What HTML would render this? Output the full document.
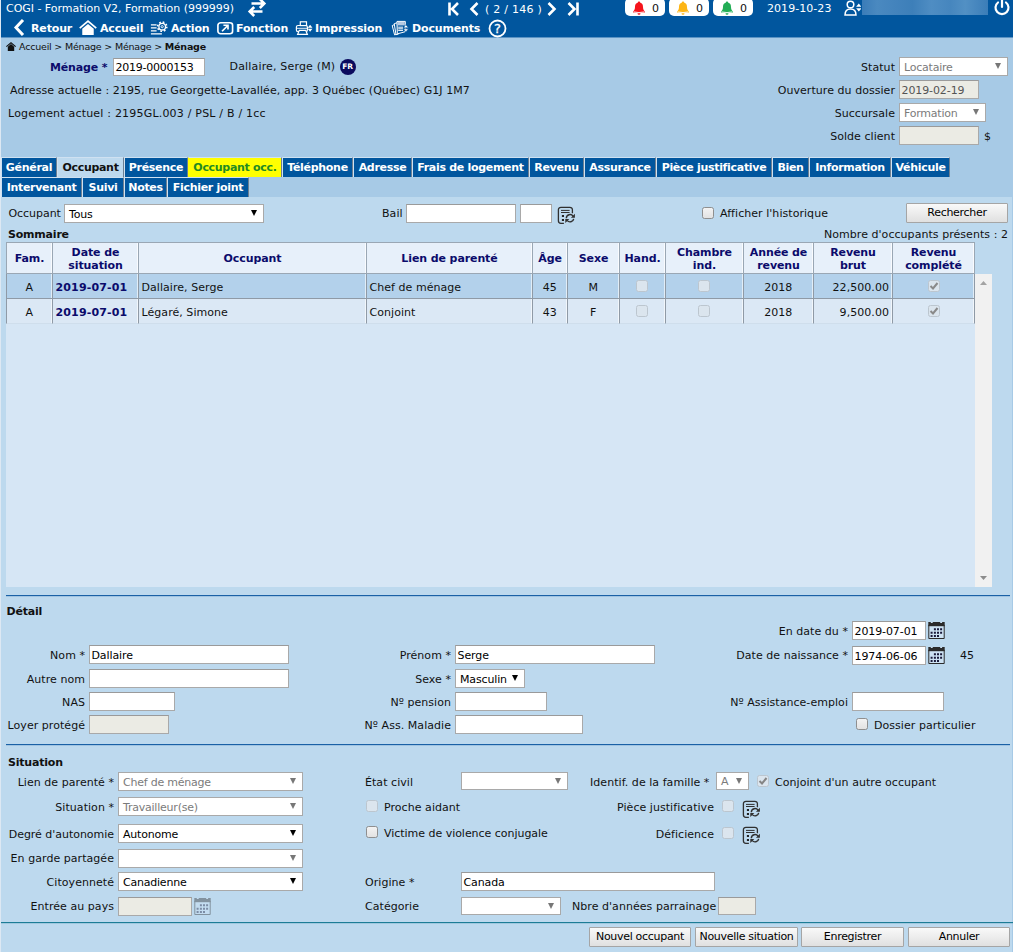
<!DOCTYPE html>
<html lang="fr">
<head>
<meta charset="utf-8">
<title>COGI - Ménage</title>
<style>
*{box-sizing:border-box;margin:0;padding:0}
html,body{width:1013px;height:952px;overflow:hidden}
body{position:relative;background:#a7cae6;font-family:"DejaVu Sans","Liberation Sans",sans-serif;font-size:11px;color:#111;letter-spacing:.05px}
.a{position:absolute;white-space:nowrap}
.t{position:absolute;white-space:nowrap;height:18px;line-height:20px}
.r{text-align:right}
.b{font-weight:bold}
#hdr{left:0;top:0;width:1013px;height:38px;background:#01569e;border-bottom:1px solid #5b93c4}
#hdr .w{color:#fff}
.menu{color:#fff;font-weight:bold;font-size:11px;letter-spacing:-.15px;height:16px;line-height:16px;top:21px}
.pill{top:-2px;height:18px;width:40px;background:#fff;border-radius:5px;color:#111;line-height:21px;padding-left:27px}
.in{letter-spacing:-.1px;position:absolute;height:19px;background:#fff;border:1px solid #a9a9a9;border-top-color:#9a9a9a;line-height:19px;padding-left:1.5px;white-space:nowrap;overflow:hidden;color:#000}
.in.d{background:#ebebe4;color:#545454}
.sel{letter-spacing:-.22px;position:absolute;height:19px;background:#fff;border:1px solid #a9a9a9;line-height:19px;padding-left:4px;white-space:nowrap;overflow:hidden;color:#000}
.sel.g{color:#7b7b7b}
.sel:after{content:"";position:absolute;right:6px;top:5px;border-left:3.2px solid transparent;border-right:3.2px solid transparent;border-top:6px solid #000}
.sel.g:after{border-top-color:#777}
.cb{position:absolute;width:12px;height:12px;border:1px solid #8f8f8f;border-radius:2.500px;background:linear-gradient(#f3f3f3,#e2e2e2)}
.cb.d{border-color:#bcc6cf;background:#dbe5ee}
.btn{position:absolute;height:20px;border:1px solid #a5a5a5;background:linear-gradient(#f9f9f9,#e0e0e0);text-align:center;line-height:18px;letter-spacing:-.3px;color:#000;border-radius:1px}
#panel{left:1px;top:197px;width:1011px;height:755px;background:#bdd9ee}
.tab{position:absolute;height:20px;line-height:19px;background:#01569e;color:#fff;font-weight:bold;text-align:center;letter-spacing:-.3px;border-top:1px solid #cfe1f1;border-left:1px solid #cfe1f1;border-right:1px solid #6c7f92}
.tab.on{background:#bdd9ee;color:#111}
.tab.y{background:#ffff00;color:#238a23;border-left-color:#ffff00}
.hr{position:absolute;left:6px;width:1004px;height:2px;background:linear-gradient(#1a61a6 50%,rgba(26,97,166,.18) 50%)}
table{border-collapse:collapse}
#grid{left:6px;top:242px;width:969px;height:345px;background:#d6e6f5}
#grid .h{position:absolute;top:0;height:32px;background:#e7f0fa;border:1px solid #9aa7b4;color:#0b0b6b;font-weight:bold;text-align:center;line-height:13px;letter-spacing:-.1px;display:flex;align-items:center;justify-content:center;padding-top:1px;box-shadow:inset -1px 0 0 rgba(255,255,255,.75)}
#grid .c{position:absolute;height:25px;line-height:20px;padding-top:4px !important;border-right:1px solid #8f9aa6;border-bottom:1px solid #8f9aa6;padding:0 3px 0 2.500px;box-shadow:inset -1px 0 0 rgba(255,255,255,.6);text-align:center;white-space:nowrap}
.r1 .c{background:#b3d1eb}
.r2 .c{background:#dbe8f5;border-bottom-color:#cfdeec !important}
</style>
</head>
<body>
<!-- header -->
<div class="a" id="hdr">
  <div class="t w" style="left:6px;top:-1px;letter-spacing:-.03px">COGI - Formation V2, Formation (999999)</div>
  <svg class="a" style="left:247px;top:-2px" width="20" height="19" viewBox="0 0 20 19"><g fill="none" stroke="#fff" stroke-width="2.6"><path d="M4.500 5.500h12M12.800 1l4.500 4.500l-4.500 4.500"/><path d="M15.500 13.500h-12M7.200 9l-4.500 4.500l4.500 4.500"/></g></svg>
  <svg class="a" style="left:446px;top:2px" width="135" height="14" viewBox="0 0 135 14"><g fill="none" stroke="#fff" stroke-width="2.6"><path d="M3.500 0.500v13M12 1l-6 6l6 6"/><path d="M31.500 1l-6 6l6 6"/><path d="M102.5 1l6 6l-6 6"/><path d="M131.5 0.5v13M122.5 1l6 6l-6 6"/></g></svg>
  <div class="t w" style="left:485px;top:0;letter-spacing:.25px">( 2 / 146 )</div>
  <div class="a pill" style="left:625px">0</div>
  <div class="a pill" style="left:669px">0</div>
  <div class="a pill" style="left:713px">0</div>
  <svg class="a" style="left:632px;top:1px" width="14" height="14" viewBox="0 0 14 14"><path fill="#f5141c" d="M7 0.5c.7 0 1.1.5 1.1 1.1c2 .6 2.9 2.200 2.900 4.400c0 2.500.8 3.500 2 4.500v1h-12v-1c1.200-1 2-2 2-4.500c0-2.200.9-3.800 2.900-4.400c0-.6.4-1.100 1.100-1.100zM5.500 12.300h3a1.500 1.500 0 0 1-3 0z"/><path d="M1.500 10.800q5.500 1.600 11 0" fill="none" stroke="#fff" stroke-width=".8"/></svg>
  <svg class="a" style="left:676px;top:1px" width="14" height="14" viewBox="0 0 14 14"><path fill="#fdb515" d="M7 0.5c.7 0 1.1.5 1.1 1.1c2 .6 2.900 2.200 2.900 4.400c0 2.500.8 3.500 2 4.500v1h-12v-1c1.200-1 2-2 2-4.500c0-2.200.9-3.800 2.900-4.400c0-.6.4-1.100 1.100-1.100zM5.500 12.300h3a1.500 1.500 0 0 1-3 0z"/><path d="M1.500 10.800q5.500 1.600 11 0" fill="none" stroke="#fff" stroke-width=".8"/></svg>
  <svg class="a" style="left:720px;top:1px" width="14" height="14" viewBox="0 0 14 14"><path fill="#22ad55" d="M7 0.5c.7 0 1.1.5 1.1 1.1c2 .6 2.900 2.200 2.900 4.400c0 2.500.8 3.500 2 4.500v1h-12v-1c1.200-1 2-2 2-4.500c0-2.200.9-3.800 2.900-4.400c0-.6.4-1.100 1.100-1.100zM5.500 12.300h3a1.500 1.500 0 0 1-3 0z"/><path d="M1.500 10.800q5.500 1.600 11 0" fill="none" stroke="#fff" stroke-width=".8"/></svg>
  <div class="t w" style="left:767px;top:-1px">2019-10-23</div>
  <svg class="a" style="left:844px;top:0px" width="17" height="16" viewBox="0 0 17 16"><g fill="none" stroke="#fff" stroke-width="1.5"><circle cx="6.500" cy="4.500" r="3.300"/><path d="M1 15c0-4 2-6 5.500-6s5.500 2 5.500 6z"/></g><path fill="#fff" d="M14.800 3.600l2.700 3.200h-5.400zM14.800 11.500l2.700-3.200h-5.400z"/></svg>
  <div class="a" style="left:862px;top:0;width:126px;height:15px;background:linear-gradient(90deg,#3a7cb8,#4a89c0 12%,#4484bd 25%,#3d7fb9 40%,#4f8dc3 55%,#4686be 70%,#5290c4 82%,#3b7db8)"></div>
  <svg class="a" style="left:993px;top:-1px" width="18" height="18" viewBox="0 0 18 18"><g fill="none" stroke="#fff" stroke-width="2.200" stroke-linecap="round"><path d="M9 1v7"/><path d="M5 3.500a6.500 6.500 0 1 0 8 0"/></g></svg>
  <!-- menu -->
  <svg class="a" style="left:13px;top:19px" width="12" height="17" viewBox="0 0 12 17"><path fill="none" stroke="#fff" stroke-width="3" d="M10 1l-7 7.500l7 7.500"/></svg>
  <div class="a menu" style="left:31px">Retour</div>
  <svg class="a" style="left:79px;top:20px" width="18" height="15" viewBox="0 0 20 17"><path fill="#fff" d="M10 0l10 8.500l-1.300 1.400l-8.700-7.300l-8.700 7.300l-1.300-1.400zM3.500 10l6.500-5.400l6.500 5.400v7h-13z"/></svg>
  <div class="a menu" style="left:100px">Accueil</div>
  <svg class="a" style="left:150px;top:20px" width="18" height="16" viewBox="0 0 18 16"><g fill="none" stroke="#fff"><path d="M0.900 4.900h5.700M0.900 7.800h5.700M0.900 10.800h5.700M0.900 13.800h11" stroke-width="1.300"/><circle cx="12.200" cy="6.700" r="3.300" stroke-width="1.300"/><circle cx="12.200" cy="6.700" r="4.600" stroke-width="1.600" stroke-dasharray="1.700 1.910"/><circle cx="12.200" cy="6.700" r="1.100" stroke-width=".9"/></g></svg>
  <div class="a menu" style="left:171px">Action</div>
  <svg class="a" style="left:217px;top:22px" width="16.500" height="12.500" viewBox="0 0 18 15" preserveAspectRatio="none"><rect x="1" y="1" width="16" height="13" rx="3" fill="none" stroke="#fff" stroke-width="1.800"/><path fill="none" stroke="#fff" stroke-width="1.800" d="M5.500 11l6-6.500M7 4h5v5"/></svg>
  <div class="a menu" style="left:236px">Fonction</div>
  <svg class="a" style="left:295px;top:20px" width="18" height="16" viewBox="0 0 18 16"><g fill="none" stroke="#fff" stroke-width="1.200"><rect x="5.300" y="1.800" width="6.200" height="3.800"/><rect x="1.400" y="5.500" width="11" height="6" rx="1.600"/><path d="M2 8.300h10" stroke-width=".9"/><path d="M4.300 10.300h6.400l1.700 4.100h-9.800z" fill="#01569e"/></g><path fill="#fff" d="M15.100 4.800l2.400 3h-4.800zM15.100 11.800l2.400-3h-4.800z"/></svg>
  <div class="a menu" style="left:315px">Impression</div>
  <svg class="a" style="left:391px;top:20px" width="19" height="16" viewBox="0 0 19 16"><g fill="#01569e" stroke="#fff" stroke-width="1"><path d="M1.200 5.600l3-1.400l1.600 10l-2.200.7z"/><path d="M3.200 3.700l3-1l1.200 11.400l-2.400.6z"/><path d="M6 1.400h8.300v10.300l-8 2.200z"/></g><path d="M6.600 2h7.200v3.400h-7.200z" fill="#b6cae2"/><path d="M7.200 7.200h4.800M7.200 8.800h4.800M7.200 10.400h4.800" stroke="#fff" stroke-width="1" fill="none"/><path fill="#fff" stroke="#01569e" stroke-width=".6" d="M14.900 4.700l2.600 3.100h-5.200zM14.900 11.900l2.600-3.100h-5.200z"/></svg>
  <div class="a menu" style="left:412px">Documents</div>
  <svg class="a" style="left:488px;top:19px" width="19" height="19" viewBox="0 0 19 19"><circle cx="9.500" cy="9.500" r="8" fill="none" stroke="#fff" stroke-width="1.800"/><text x="9.500" y="14" text-anchor="middle" font-family="DejaVu Sans, sans-serif" font-size="13" fill="#fff" stroke="#fff" stroke-width=".3">?</text></svg>
</div>

<!-- breadcrumb -->
<svg class="a" style="left:5.500px;top:41.500px" width="10" height="9" viewBox="0 0 10 9"><path fill="#111" d="M5 0l5 4.200l-.7.800l-4.300-3.600l-4.300 3.600l-.7-.8zM1.800 4.700l3.200-2.700l3.200 2.700v4.300h-6.400z"/></svg>
<div class="a" style="left:19px;top:40px;font-size:9.500px;height:13px;line-height:13px;letter-spacing:-.2px">Accueil &gt; Ménage &gt; Ménage &gt; <b>Ménage</b></div>

<!-- top info -->
<div class="t b" style="left:50px;top:58px;color:#0b0b6b;letter-spacing:-.15px">Ménage *</div>
<div class="in" style="left:113px;top:58px;width:92px;height:18px;line-height:18px;letter-spacing:-.25px">2019-0000153</div>
<div class="t" style="left:229.500px;top:57px;letter-spacing:.17px">Dallaire, Serge (M)</div>
<div class="a" style="left:339.500px;top:58.500px;width:16px;height:16px;border-radius:50%;background:#0b0b5e;color:#fff;font-size:7.500px;font-weight:bold;text-align:center;line-height:16px;letter-spacing:-.2px">FR</div>
<div class="t" style="left:10px;top:81px;letter-spacing:.07px">Adresse actuelle : 2195, rue Georgette-Lavallée, app. 3 Québec (Québec) G1J 1M7</div>
<div class="t" style="left:8px;top:104px;letter-spacing:.2px">Logement actuel : 2195GL.003 / PSL / B / 1cc</div>

<div class="t r" style="left:700px;width:195px;top:58px">Statut</div>
<div class="sel g" style="left:899px;top:57px;width:109px">Locataire</div>
<div class="t r" style="left:700px;width:195px;top:81px">Ouverture du dossier</div>
<div class="in d" style="left:899px;top:80px;width:80px">2019-02-19</div>
<div class="t r" style="left:700px;width:195px;top:104px">Succursale</div>
<div class="sel g" style="left:899px;top:103px;width:87px">Formation</div>
<div class="t r" style="left:700px;width:195px;top:127px">Solde client</div>
<div class="in d" style="left:899px;top:126px;width:80px"></div>
<div class="t" style="left:984px;top:127px">$</div>

<!-- tabs -->
<div class="tab" style="left:1px;top:157px;width:56px">Général</div>
<div class="tab on" style="left:57px;top:157px;width:67px">Occupant</div>
<div class="tab" style="left:124px;top:157px;width:64px">Présence</div>
<div class="tab y" style="left:188px;top:157px;width:94px">Occupant occ.</div>
<div class="tab" style="left:282px;top:157px;width:71px">Téléphone</div>
<div class="tab" style="left:353px;top:157px;width:59px">Adresse</div>
<div class="tab" style="left:412px;top:157px;width:117px">Frais de logement</div>
<div class="tab" style="left:529px;top:157px;width:55px">Revenu</div>
<div class="tab" style="left:584px;top:157px;width:72px">Assurance</div>
<div class="tab" style="left:656px;top:157px;width:116px">Pièce justificative</div>
<div class="tab" style="left:772px;top:157px;width:37px">Bien</div>
<div class="tab" style="left:809px;top:157px;width:82px">Information</div>
<div class="tab" style="left:891px;top:157px;width:59px">Véhicule</div>
<div class="tab" style="left:1px;top:177px;width:81px">Intervenant</div>
<div class="tab" style="left:82px;top:177px;width:42px">Suivi</div>
<div class="tab" style="left:124px;top:177px;width:43px">Notes</div>
<div class="tab" style="left:167px;top:177px;width:82px">Fichier joint</div>

<div class="a" id="panel"></div>
<div class="a" style="left:0;top:0;width:1px;height:952px;background:#dde8f3;z-index:5"></div>

<!-- filter row -->
<div class="t" style="left:8.500px;top:204px;letter-spacing:-.05px">Occupant</div>
<div class="sel" style="left:64px;top:204px;width:200px">Tous</div>
<div class="t" style="left:382px;top:204px">Bail</div>
<div class="in" style="left:406px;top:204px;width:110px"></div>
<div class="in" style="left:520px;top:204px;width:32px"></div>
<svg class="a ic" style="left:557px;top:206px" width="19" height="19" viewBox="0 0 19 19"><use href="#icf"/></svg>
<div class="cb" style="left:702px;top:207px"></div>
<div class="t" style="left:720px;top:204px">Afficher l'historique</div>
<div class="btn" style="left:906px;top:203px;width:102px">Rechercher</div>

<div class="t b" style="left:8px;top:225px;letter-spacing:-.2px">Sommaire</div>
<div class="t r" style="left:800px;width:208px;top:225px">Nombre d'occupants présents : 2</div>

<!-- grid -->
<div class="a" id="grid">
  <div class="h" style="left:0;width:47px">Fam.</div>
  <div class="h" style="left:46px;width:87px">Date de<br>situation</div>
  <div class="h" style="left:132px;width:229px">Occupant</div>
  <div class="h" style="left:360px;width:167px">Lien de parenté</div>
  <div class="h" style="left:526px;width:36px">Âge</div>
  <div class="h" style="left:561px;width:53px">Sexe</div>
  <div class="h" style="left:613px;width:47px">Hand.</div>
  <div class="h" style="left:659px;width:79px">Chambre<br>ind.</div>
  <div class="h" style="left:737px;width:71px">Année de<br>revenu</div>
  <div class="h" style="left:807px;width:80px">Revenu<br>brut</div>
  <div class="h" style="left:886px;width:83px">Revenu<br>complété</div>
  <div class="r1">
    <div class="c" style="top:32px;left:0;width:47px;border-left:1px solid #8f9aa6">A</div>
    <div class="c b" style="top:32px;left:47px;width:86px;color:#0b0b6b;text-align:left;letter-spacing:.15px">2019-07-01</div>
    <div class="c" style="top:32px;left:133px;width:228px;text-align:left">Dallaire, Serge</div>
    <div class="c" style="top:32px;left:361px;width:166px;text-align:left">Chef de ménage</div>
    <div class="c" style="top:32px;left:527px;width:35px">45</div>
    <div class="c" style="top:32px;left:562px;width:52px">M</div>
    <div class="c" style="top:32px;left:614px;width:46px"><span class="cb d" style="left:16px;top:6px"></span></div>
    <div class="c" style="top:32px;left:660px;width:78px"><span class="cb d" style="left:32px;top:6px"></span></div>
    <div class="c" style="top:32px;left:738px;width:70px">2018</div>
    <div class="c" style="top:32px;left:808px;width:79px;text-align:right">22,500.00</div>
    <div class="c" style="top:32px;left:887px;width:82px"><span class="cb d" style="left:35px;top:6px"></span><svg class="a" style="left:36px;top:7px" width="10" height="10" viewBox="0 0 10 10"><path d="M1.500 5l2.500 2.500l4.500-5.500" fill="none" stroke="#8a8a8a" stroke-width="2"/></svg></div>
  </div>
  <div class="r2">
    <div class="c" style="top:57px;left:0;width:47px;border-left:1px solid #8f9aa6">A</div>
    <div class="c b" style="top:57px;left:47px;width:86px;color:#0b0b6b;text-align:left;letter-spacing:.15px">2019-07-01</div>
    <div class="c" style="top:57px;left:133px;width:228px;text-align:left">Légaré, Simone</div>
    <div class="c" style="top:57px;left:361px;width:166px;text-align:left">Conjoint</div>
    <div class="c" style="top:57px;left:527px;width:35px">43</div>
    <div class="c" style="top:57px;left:562px;width:52px">F</div>
    <div class="c" style="top:57px;left:614px;width:46px"><span class="cb d" style="left:16px;top:6px"></span></div>
    <div class="c" style="top:57px;left:660px;width:78px"><span class="cb d" style="left:32px;top:6px"></span></div>
    <div class="c" style="top:57px;left:738px;width:70px">2018</div>
    <div class="c" style="top:57px;left:808px;width:79px;text-align:right">9,500.00</div>
    <div class="c" style="top:57px;left:887px;width:82px"><span class="cb d" style="left:35px;top:6px"></span><svg class="a" style="left:36px;top:7px" width="10" height="10" viewBox="0 0 10 10"><path d="M1.500 5l2.500 2.500l4.500-5.500" fill="none" stroke="#8a8a8a" stroke-width="2"/></svg></div>
  </div>
</div>
<!-- scrollbar -->
<div class="a" style="left:975px;top:274px;width:17px;height:313px;background:#f1f1f1"></div>
<svg class="a" style="left:980px;top:281px" width="7" height="4" viewBox="0 0 7 4"><path d="M3.500 0l3.500 4h-7z" fill="#a3a3a3"/></svg>
<svg class="a" style="left:980px;top:576px" width="7" height="4" viewBox="0 0 7 4"><path d="M3.500 4l3.500-4h-7z" fill="#8c8c8c"/></svg>

<!-- DETAIL -->
<div class="hr" style="top:595px"></div>
<div class="t b" style="left:6.500px;top:602px;letter-spacing:-.2px">Détail</div>


<div class="t r" style="left:648px;width:200px;top:622px">En date du *</div>
<div class="in" style="left:852px;top:621px;width:74px">2019-07-01</div>
<svg class="a" style="left:928px;top:622px" width="17" height="17" viewBox="0 0 17 17"><use href="#cal"/></svg>
<div class="t r" style="left:0;width:85px;top:646px">Nom *</div>
<div class="in" style="left:89px;top:645px;width:200px">Dallaire</div>
<div class="t r" style="left:300px;width:151px;top:646px">Prénom *</div>
<div class="in" style="left:455px;top:645px;width:200px">Serge</div>
<div class="t r" style="left:648px;width:200px;top:646px">Date de naissance *</div>
<div class="in" style="left:852px;top:646px;width:74px">1974-06-06</div>
<svg class="a" style="left:928px;top:647px" width="17" height="17" viewBox="0 0 17 17"><use href="#cal"/></svg>
<div class="t" style="left:960px;top:646px">45</div>
<div class="t r" style="left:0;width:85px;top:670px">Autre nom</div>
<div class="in" style="left:89px;top:669px;width:200px"></div>
<div class="t r" style="left:300px;width:151px;top:670px">Sexe *</div>
<div class="sel" style="left:455px;top:669px;width:70px;letter-spacing:-.15px">Masculin</div>
<div class="t r" style="left:0;width:85px;top:693px">NAS</div>
<div class="in" style="left:89px;top:692px;width:86px"></div>
<div class="t r" style="left:300px;width:151px;top:693px">Nº pension</div>
<div class="in" style="left:455px;top:692px;width:92px"></div>
<div class="t r" style="left:648px;width:200px;top:693px">Nº Assistance-emploi</div>
<div class="in" style="left:852px;top:692px;width:92px"></div>
<div class="t r" style="left:0;width:85px;top:716px">Loyer protégé</div>
<div class="in d" style="left:89px;top:715px;width:80px"></div>
<div class="t r" style="left:300px;width:151px;top:716px">Nº Ass. Maladie</div>
<div class="in" style="left:455px;top:715px;width:128px"></div>
<div class="cb" style="left:856px;top:718px"></div>
<div class="t" style="left:874px;top:716px">Dossier particulier</div>
<div class="hr" style="top:744px"></div>
<div class="t b" style="left:8px;top:753px;letter-spacing:-.2px">Situation</div>


<div class="t r" style="left:0;width:114px;top:773px">Lien de parenté *</div>
<div class="sel g" style="left:118px;top:772px;width:185px">Chef de ménage</div>
<div class="t" style="left:365px;top:773px">État civil</div>
<div class="sel g" style="left:461px;top:772px;width:107px;height:18px"></div>
<div class="t" style="left:590px;top:773px">Identif. de la famille *</div>
<div class="sel g" style="left:716px;top:772px;width:33px;height:18px;line-height:18px">A</div>
<div class="cb d" style="left:757px;top:775px"></div>
<svg class="a" style="left:758px;top:776px" width="10" height="10" viewBox="0 0 10 10"><path d="M1.500 5l2.500 2.500l4.500-5.500" fill="none" stroke="#858585" stroke-width="2"/></svg>
<div class="t" style="left:775px;top:773px">Conjoint d'un autre occupant</div>

<div class="t r" style="left:0;width:114px;top:798px">Situation *</div>
<div class="sel g" style="left:118px;top:797px;width:185px">Travailleur(se)</div>
<div class="cb d" style="left:366px;top:800px"></div>
<div class="t" style="left:384px;top:798px">Proche aidant</div>
<div class="t r" style="left:560px;width:154px;top:798px">Pièce justificative</div>
<div class="cb d" style="left:722px;top:800px"></div>
<svg class="a" style="left:742px;top:800px" width="19" height="19" viewBox="0 0 19 19"><use href="#icf"/></svg>

<div class="t r" style="left:0;width:114px;top:825px;letter-spacing:-.03px">Degré d'autonomie</div>
<div class="sel" style="left:118px;top:824px;width:185px">Autonome</div>
<div class="cb" style="left:366px;top:826px"></div>
<div class="t" style="left:384px;top:824px;letter-spacing:-.03px">Victime de violence conjugale</div>
<div class="t r" style="left:560px;width:154px;top:825px">Déficience</div>
<div class="cb d" style="left:722px;top:827px"></div>
<svg class="a" style="left:742px;top:826px" width="19" height="19" viewBox="0 0 19 19"><use href="#icf"/></svg>

<div class="t r" style="left:0;width:114px;top:849px">En garde partagée</div>
<div class="sel g" style="left:118px;top:849px;width:185px"></div>

<div class="t r" style="left:0;width:114px;top:873px">Citoyenneté</div>
<div class="sel" style="left:118px;top:872px;width:185px">Canadienne</div>
<div class="t" style="left:365px;top:873px">Origine *</div>
<div class="in" style="left:461px;top:872px;width:254px">Canada</div>

<div class="t r" style="left:0;width:114px;top:897px">Entrée au pays</div>
<div class="in d" style="left:118px;top:897px;width:74px"></div>
<svg class="a" style="left:194px;top:898px;opacity:.4" width="17" height="17" viewBox="0 0 17 17"><use href="#cal"/></svg>
<div class="t" style="left:365px;top:897px">Catégorie</div>
<div class="sel g" style="left:461px;top:897px;width:100px;height:18px"></div>
<div class="t" style="left:572px;top:897px">Nbre d'années parrainage</div>
<div class="in d" style="left:718px;top:897px;width:38px;height:18px"></div>
<div class="hr" style="top:922px;left:1px;width:1012px;background:linear-gradient(#1c7c96 50%,rgba(28,124,150,.18) 50%)"></div>
<div class="btn" style="left:589px;top:927px;width:102px">Nouvel occupant</div>
<div class="btn" style="left:695px;top:927px;width:103px">Nouvelle situation</div>
<div class="btn" style="left:801px;top:927px;width:103px">Enregistrer</div>
<div class="btn" style="left:908px;top:927px;width:102px">Annuler</div>


<svg width="0" height="0" style="position:absolute"><defs>
<g id="icf"><path d="M15.400 7.300V3.800a2.500 2.500 0 0 0-2.500-2.500H3.900a2.500 2.500 0 0 0-2.500 2.500V14.800a2.500 2.500 0 0 0 2.500 2.500H6.900" fill="none" stroke="#303030" stroke-width="1.300"/><path d="M4 4.400H12.600M4 6.500H12.600" stroke="#303030" stroke-width="1" fill="none"/><path d="M4.900 9h2.100v2.100h-2.100zM4.900 13h2.100v2.100h-2.100z" fill="#222"/><path d="M9.300 12.200a3.700 3.700 0 0 1 6.800-1.900M16.700 12.800a3.700 3.700 0 0 1-6.600 1.600" fill="none" stroke="#303030" stroke-width="1.400"/><path d="M17.900 7.800v4h-4zM8.300 16.900v-4h4z" fill="#303030"/></g>
<g id="cal"><path d="M0.800 3V16.500H16.200V3z" fill="#cde2f3" stroke="#2b2b2b" stroke-width="1"/><rect x="0.300" y="0" width="16.400" height="4.200" fill="#2b2b2b"/><path d="M2.800 0h1.900v.9h-1.900zM12.200 0h1.900v.9h-1.900z" fill="#cde2f3"/><path d="M5.900 6.300h2v2h-2zM9 6.300h2v2h-2zM12.100 6.300h2v2h-2zM2.600 9.700h2v2h-2zM5.900 9.700h2v2h-2zM9 9.700h2v2h-2zM12.100 9.700h2v2h-2zM2.600 13h2v2h-2zM5.900 13h2v2h-2zM9 13h2v2h-2z" fill="#1a1a3a"/></g>
</defs></svg>
</body>
</html>
